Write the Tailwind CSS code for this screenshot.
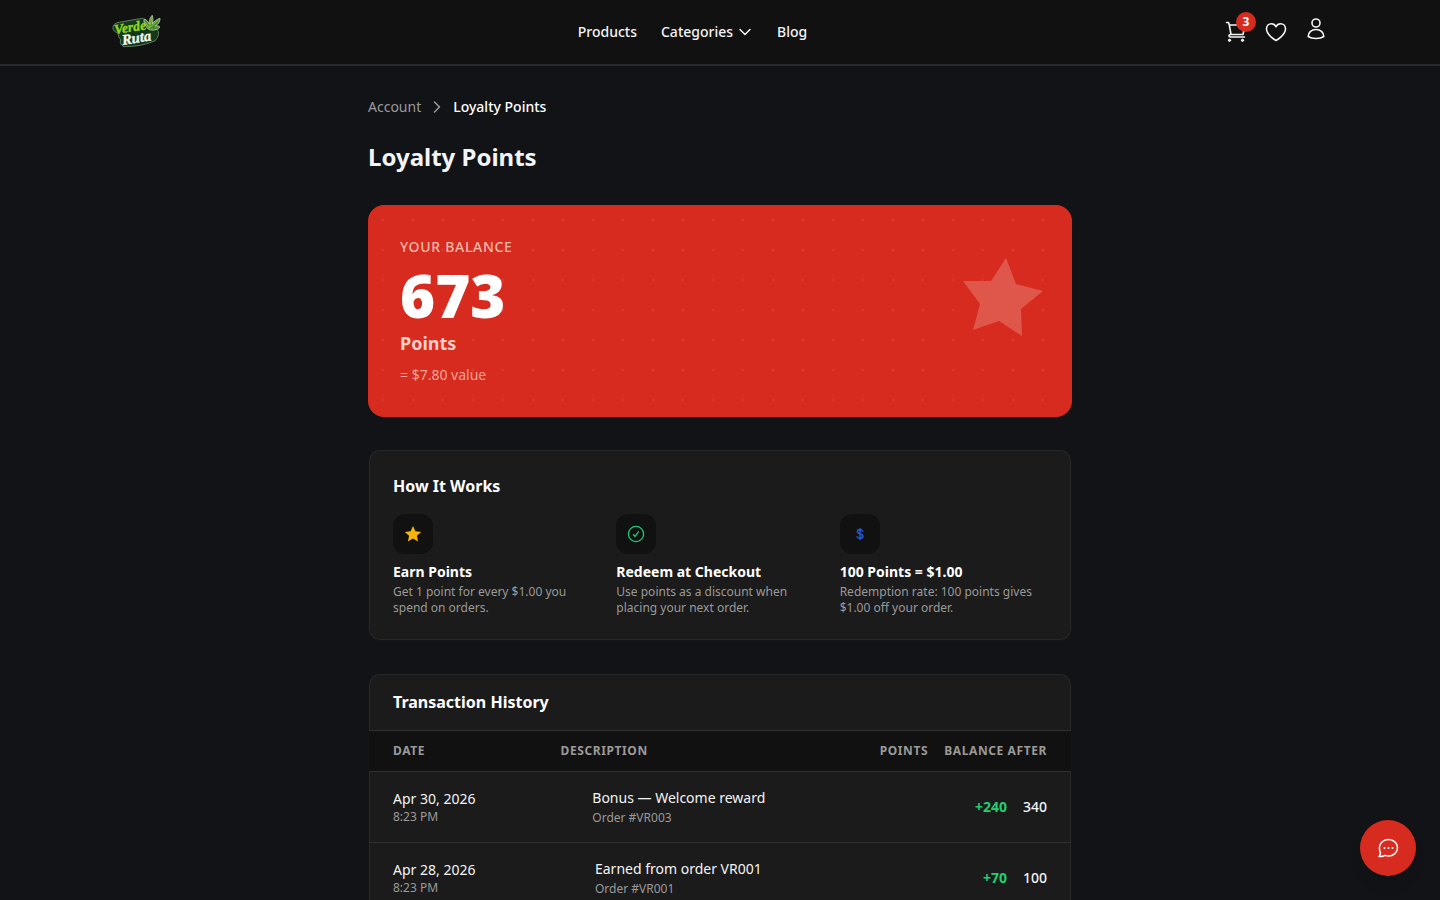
<!DOCTYPE html>
<html lang="en">
<head>
    <meta charset="UTF-8">
    <meta name="viewport" content="width=device-width, initial-scale=1.0">
    <title>Loyalty Points - Verde Ruta</title>
    <script src="https://cdn.jsdelivr.net/npm/@tailwindcss/browser@4"></script>
</head>
<body class="min-h-screen overflow-x-hidden bg-[#121316] font-['Noto_Sans',sans-serif] text-gray-100">
    <header class="sticky top-0 z-20 h-[65px] bg-[#111111] border-b border-[#27292b] shadow-[0_1px_0_#27292b]">
        <div class="max-w-7xl mx-auto h-16 px-8 flex items-center justify-between">
            <a href="/" aria-label="Verde Ruta">
                <svg class="w-[49px] h-[36px]" viewBox="0 0 50 36" aria-hidden="true">
                    <path d="M1 15 Q0 9 8 8 L31 4 Q38 6 38 12 L46 15 Q50 20 44 27 Q30 33 12 33 Q7 30 9 26 Q6 23 6 19 Q2 18 1 15Z" fill="#12391b" stroke="#5f7f5b" stroke-width="1"/>
                    <path d="M37 15 C33 11 32 7 33 5 C36 6 37 8 38 10 C38 6 39 3 41 1 C42 4 42 7 41 10 C43 7 46 5 49 4 C49 8 47 10 44 12 C46 11 48 12 49 13 C46 16 41 17 37 15Z" fill="#4c8a2c" stroke="#a9c49a" stroke-width="1"/>
                    <path d="M38 14 L41 3 M38 14 L47 6 M38 14 L34 8" stroke="#84c341" stroke-width="1" fill="none"/>
                    <g transform="rotate(-9 24 18)" font-family="'Liberation Serif',serif" font-style="italic" font-weight="bold" stroke-width="0.4">
                        <text x="3" y="17" font-size="14" fill="#92d51e" stroke="#92d51e">Verde</text>
                        <text x="9" y="29" font-size="15" fill="#f1f6ee" stroke="#f1f6ee">Ruta</text>
                    </g>
                </svg>
            </a>

            <nav class="flex items-center gap-6 text-sm font-medium">
                <a href="/products">Products</a>
                <button type="button" class="flex items-center gap-1">
                    Categories
                    <svg class="size-4" viewBox="0 0 16 16" fill="none" stroke="currentColor" stroke-width="1.5" stroke-linecap="round" stroke-linejoin="round"><path d="M3 5.5l5 5 5-5"/></svg>
                </button>
                <a href="/blog">Blog</a>
            </nav>

            <div class="flex items-center gap-4">
                <a href="/cart" aria-label="Cart" class="relative">
                    <svg class="size-6" viewBox="0 0 24 24" fill="none" stroke="currentColor" stroke-width="1.6" stroke-linecap="round" stroke-linejoin="round">
                        <path d="M2.5 2.500h2l.8 2.500L7 14.500M5.300 5h15.700l-2 9.500H7M7 14.500c-1.500 0-2 .8-2 1.500s.5 1 1.500 1h14"/>
                        <circle cx="5.500" cy="20.300" r="1.200" fill="currentColor" stroke-width="0.800"/>
                        <circle cx="18.500" cy="20.300" r="1.200" fill="currentColor" stroke-width="0.800"/>
                    </svg>
                    <span class="absolute -top-2 -right-2 size-5 rounded-full bg-[#d62b1e] text-white text-xs font-bold flex items-center justify-center">3</span>
                </a>
                <a href="/wishlist" aria-label="Wishlist">
                    <svg class="size-6" viewBox="0 0 24 24" fill="none" stroke="currentColor" stroke-width="1.6" stroke-linecap="round" stroke-linejoin="round">
                        <path d="M21.500 8.800c0-2.900-2.200-5.100-4.900-5.100-2 0-3.800 1.200-4.600 3-.8-1.800-2.600-3-4.600-3-2.700 0-4.900 2.200-4.900 5.100 0 6.700 9.500 11.700 9.500 11.700s9.500-5 9.500-11.700z"/>
                    </svg>
                </a>
                <a href="/account" aria-label="Account" class="pb-1.5">
                    <svg class="size-6" viewBox="0 0 24 24" fill="none" stroke="currentColor" stroke-width="1.6" stroke-linecap="round" stroke-linejoin="round">
                        <circle cx="12" cy="6" r="4"/>
                        <path d="M4.200 19.500C4.200 15.800 7 12.500 12 12.500s7.800 3.300 7.800 7c-2 1.500-5 2-7.800 2s-5.800-.5-7.800-2z"/>
                    </svg>
                </a>
            </div>
        </div>
    </header>

    <main class="max-w-3xl mx-auto px-8 py-8">
        <nav aria-label="Breadcrumb" class="mb-6 flex items-center gap-2 text-sm">
            <a href="/account" class="text-[#9a9a9a]">Account</a>
            <svg class="size-4 text-[#9a9a9a]" viewBox="0 0 16 16" fill="none" stroke="currentColor" stroke-width="1.5" stroke-linecap="round" stroke-linejoin="round"><path d="M5.500 3l5 5-5 5"/></svg>
            <span class="font-medium text-white">Loyalty Points</span>
        </nav>

        <h1 class="mb-8 text-2xl font-bold">Loyalty Points</h1>

        <!-- Balance -->
        <section class="relative mb-8 overflow-hidden rounded-2xl bg-[#d62b1e] p-8">
            <svg class="absolute inset-0 size-full" aria-hidden="true">
                <defs>
                    <pattern id="dots" width="30" height="30" patternUnits="userSpaceOnUse">
                        <circle cx="15" cy="15" r="1.500" fill="#fff" fill-opacity="0.070"/>
                    </pattern>
                </defs>
                <rect width="100%" height="100%" fill="url(#dots)"/>
            </svg>
            <svg class="absolute top-[50px] right-7 size-[84px] text-[#de574a]" viewBox="0 0 84 84" fill="currentColor" aria-hidden="true">
                <path d="M46 3L56 29 83 36 61 54 62 81 39 66 13 75 20 49 3 26 31 26z"/>
            </svg>
            <div class="relative">
                <p class="text-sm font-medium tracking-wider text-[#f6b9ab]">YOUR BALANCE</p>
                <p class="mt-2 text-6xl leading-none font-black text-white">673</p>
                <p class="mt-1 text-lg font-bold text-[#fbd0c8]">Points</p>
                <p class="mt-2 text-sm text-[#f3a598]">= $7.80 value</p>
            </div>
        </section>

        <!-- How it works -->
        <section class="mb-8 rounded-xl border border-[#141516] bg-[#1b1b1b] p-6 shadow-[inset_0_0_0_1px_#262727]">
            <h2 class="mb-4 text-base font-bold text-white">How It Works</h2>
            <div class="grid grid-cols-3 gap-4">
                <div>
                    <div class="mb-2 flex size-10 items-center justify-center rounded-xl bg-[#111111]">
                        <svg class="size-5 text-[#f5b50b]" viewBox="0 0 20 20" fill="currentColor"><path d="M10 2l2.400 5.300 5.800.6-4.300 3.900 1.200 5.700L10 14.600l-5.100 2.900 1.200-5.700L1.800 7.900l5.800-.6z"/></svg>
                    </div>
                    <h3 class="text-sm font-bold text-white">Earn Points</h3>
                    <p class="mt-0.5 text-xs text-[#9a9a9a]">Get 1 point for every $1.00 you spend on orders.</p>
                </div>
                <div>
                    <div class="mb-2 flex size-10 items-center justify-center rounded-xl bg-[#111111]">
                        <svg class="size-5 text-[#1fc977]" viewBox="0 0 20 20" fill="none" stroke="currentColor" stroke-width="1.300" stroke-linecap="round" stroke-linejoin="round"><circle cx="10" cy="10" r="7.600"/><path d="M7.400 10.600l1.600 1.900 3.400-4.700"/></svg>
                    </div>
                    <h3 class="text-sm font-bold text-white">Redeem at Checkout</h3>
                    <p class="mt-0.5 text-xs text-[#9a9a9a]">Use points as a discount when placing your next order.</p>
                </div>
                <div>
                    <div class="mb-2 flex size-10 items-center justify-center rounded-xl bg-[#111111]">
                        <svg class="size-5 text-[#2459dc]" viewBox="0 0 20 20" fill="none" stroke="currentColor" stroke-width="1.500" stroke-linecap="round" stroke-linejoin="round"><path d="M12.700 7.200c-.5-1.200-1.500-1.600-2.700-1.600-1.500 0-2.600.7-2.600 2 0 1.500 1.300 1.900 2.700 2.300 1.500.4 2.800.9 2.800 2.400 0 1.400-1.200 2.100-2.900 2.100-1.300 0-2.400-.5-2.900-1.700M10 4.600v10.800"/></svg>
                    </div>
                    <h3 class="text-sm font-bold text-white">100 Points = $1.00</h3>
                    <p class="mt-0.5 text-xs text-[#9a9a9a]">Redemption rate: 100 points gives $1.00 off your order.</p>
                </div>
            </div>
        </section>

        <!-- Transactions -->
        <section class="overflow-hidden rounded-xl border border-[#141516] bg-[#1b1b1b] shadow-[inset_0_0_0_1px_#262727]">
            <h2 id="history" class="border-b border-[#303132] px-6 py-4 text-base font-bold text-white">Transaction History</h2>
            <table class="block" aria-labelledby="history">
                <thead class="block">
                    <tr class="grid grid-cols-[1fr_2fr_auto_auto] gap-4 border-b border-[#303132] bg-[#111111] px-6 py-3 text-xs tracking-wider text-[#9a9a9a]">
                        <th class="text-left font-bold">DATE</th>
                        <th class="text-left font-bold">DESCRIPTION</th>
                        <th class="text-right font-bold">POINTS</th>
                        <th class="text-right font-bold">BALANCE AFTER</th>
                    </tr>
                </thead>
                <tbody class="block">
                    <tr class="grid grid-cols-[1fr_2fr_auto_auto] items-center gap-4 border-b border-[#303132] px-6 py-4 text-sm">
                        <td>
                            <p>Apr 30, 2026</p>
                            <p class="text-xs text-[#9a9a9a]">8:23 PM</p>
                        </td>
                        <td>
                            <p>Bonus — Welcome reward</p>
                            <p class="mt-0.5 text-xs text-[#9a9a9a]">Order #VR003</p>
                        </td>
                        <td class="text-right font-bold text-[#1fd071]">+240</td>
                        <td class="text-right font-medium">340</td>
                    </tr>
                    <tr class="grid grid-cols-[1fr_2fr_auto_auto] items-center gap-4 px-6 py-4 text-sm">
                        <td>
                            <p>Apr 28, 2026</p>
                            <p class="text-xs text-[#9a9a9a]">8:23 PM</p>
                        </td>
                        <td>
                            <p>Earned from order VR001</p>
                            <p class="mt-0.5 text-xs text-[#9a9a9a]">Order #VR001</p>
                        </td>
                        <td class="text-right font-bold text-[#1fd071]">+70</td>
                        <td class="text-right font-medium">100</td>
                    </tr>
                </tbody>
            </table>
        </section>
    </main>

    <button type="button" aria-label="Open chat" class="fixed right-6 bottom-6 z-30 flex size-14 items-center justify-center rounded-full bg-[#d62b1e] text-white shadow-lg">
        <svg class="size-6" viewBox="0 0 24 24" fill="none" stroke="currentColor" stroke-width="1.500" stroke-linecap="round" stroke-linejoin="round">
            <path d="M12.500 3.500c5 0 9 3.600 9 8.200s-4 8.300-9 8.300c-1.200 0-2.400-.2-3.500-.6-1.500 1-3.500 1.400-6 1.100 1-1 1.500-2.200 1.500-3.700-.7-1.400-1.100-3.200-1.100-5.100 0-4.600 4.100-8.200 9.100-8.200z"/>
            <path d="M8.500 12h.01M12.500 12h.01M16.500 12h.01" stroke-width="2"/>
        </svg>
    </button>
</body>
</html>
